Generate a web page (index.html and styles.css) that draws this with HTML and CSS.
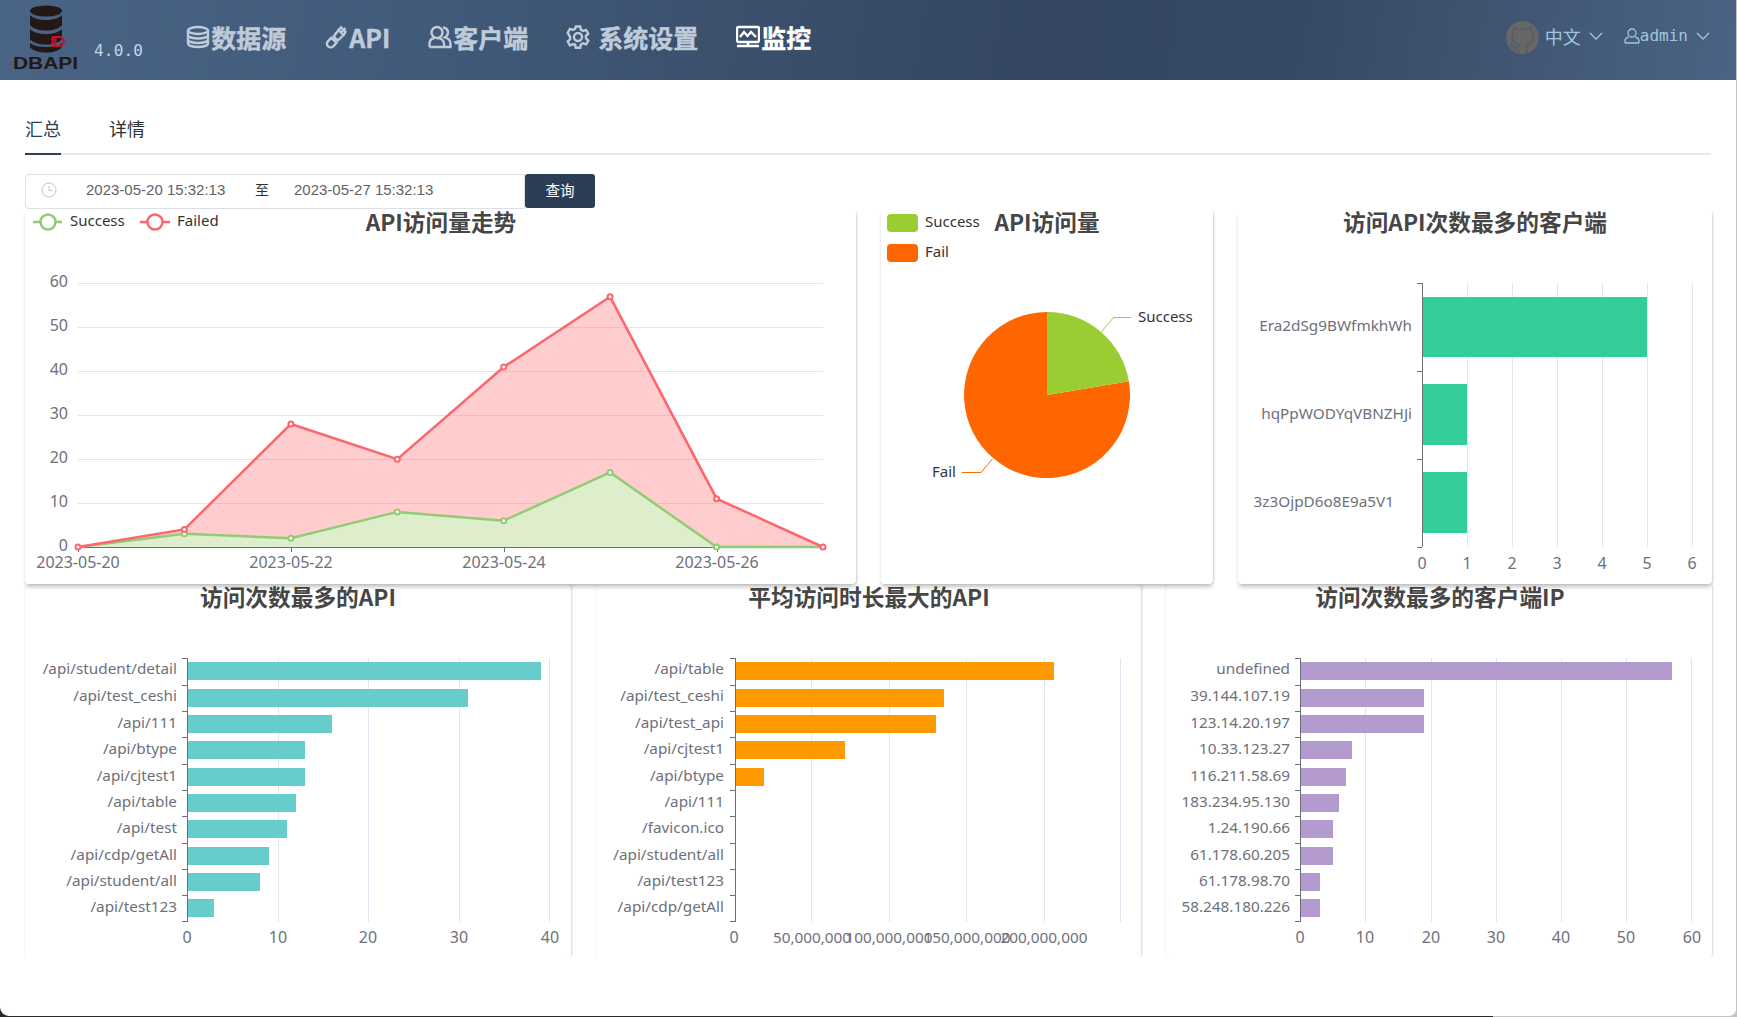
FILE: index.html
```html
<!DOCTYPE html>
<html lang="zh-CN">
<head>
<meta charset="utf-8">
<title>DBAPI</title>
<link rel="stylesheet" href="styles.css">
</head>
<body>
<header class="topbar">
  <div class="brand">
    <svg class="logo" width="65" height="66" viewBox="13 5 65 66">
      <ellipse class="logo-db" cx="46" cy="11" rx="16" ry="5.500"/>
      <path class="logo-db" d="M30 15c3 3.500 9 5 16 5s13-1.500 16-5v10c-2 3.500-9 5.500-16 5.500S32 28.500 30 25z"/>
      <path class="logo-db" d="M30 29c3 3.500 9 5 16 5s13-1.500 16-5v10c-2 3.500-9 5.500-16 5.500S32 42.500 30 39z"/>
      <path class="logo-db" d="M30 43c4 3 9 4 16 4s12-1 16-4v4c-2 3.500-9 5.500-16 5.500S32 50.500 30 47z"/>
      <path class="logo-gate" d="M53 37h6c3 0 4.500 2 4.500 4.500S62 46 59 46h-6zM55.500 37v9M51 39.500h2M51 43.500h2M63.500 41.500h2.500"/>
      <text class="logo-text" x="13" y="69" textLength="65" lengthAdjust="spacingAndGlyphs">DBAPI</text>
    </svg>
    <span class="version">4.0.0</span>
  </div>
  <nav class="nav">
    <a class="nav-item">
      <svg class="nav-icon" viewBox="0 0 24 24"><ellipse cx="12" cy="5.500" rx="10" ry="3.500"/><path d="M2 5.500v13c0 2 4.500 3.500 10 3.500s10-1.500 10-3.500v-13M2 10c0 2 4.500 3.500 10 3.500S22 12 22 10M2 14.500c0 2 4.500 3.500 10 3.500s10-1.500 10-3.500"/></svg>
      <span>数据源</span>
    </a>
    <a class="nav-item">
      <svg class="nav-icon" viewBox="0 0 24 24"><path d="M14.500 5l5 5-5.500 5.500-1.500-1.200-1.800 1.800 1.800 1.800-3.200 3.400c-1.800 1.500-4.200 1.200-5.400-.1s-1.500-3.500.1-5.100l3.400-3.300 1.800 1.800 1.800-1.800-1.200-1.500zM17 7.500L21.500 3"/><path d="M14.500 5l2.500-2.500 4.500 4.500-2 3"/></svg>
      <span>API</span>
    </a>
    <a class="nav-item">
      <svg class="nav-icon" viewBox="0 0 24 24"><circle cx="9" cy="7.500" r="5.500"/><path d="M1.500 22v-3c0-3 2-5.500 5-6M15 2.500c3 .5 5 2.500 5 5 0 2-1 3.500-3 4.800 3.500 1 5.500 3.500 5.500 6.700v3H1.500M9 13c4 0 7 2.500 7 6v3"/></svg>
      <span>客户端</span>
    </a>
    <a class="nav-item nav-item-wide">
      <svg class="nav-icon" viewBox="0 0 24 24"><circle cx="12" cy="12" r="4"/><path d="M9.800 1.500h4.400l.7 3.200 2.100 1.200 3.100-1 2.200 3.800-2.400 2.200v2.400l2.400 2.200-2.200 3.800-3.100-1-2.100 1.200-.7 3.200H9.800l-.7-3.200L7 19.300l-3.100 1-2.200-3.800 2.400-2.200v-2.400L1.700 7.700l2.200-3.800 3.100 1 2.100-1.200z"/></svg>
      <span>系统设置</span>
    </a>
    <a class="nav-item nav-item-active">
      <svg class="nav-icon" viewBox="0 0 24 24"><rect x="1" y="2" width="22" height="15" rx="1.500"/><path d="M4 12l4-5 3.500 4 3.500-4 5 5M1 21h22M12 17v4"/></svg>
      <span>监控</span>
    </a>
  </nav>
  <div class="userbar">
    <svg class="github" viewBox="0 0 16 16"><circle cx="8" cy="8" r="8"/><path class="github-cut" d="M5.470 15.590c.4.07.55-.17.55-.38 0-.19-.01-.82-.01-1.490-2.010.37-2.530-.49-2.690-.94-.09-.23-.48-.94-.82-1.130-.28-.15-.68-.52-.01-.53.63-.01 1.080.58 1.230.82.72 1.210 1.870.87 2.330.66.07-.52.28-.87.51-1.070-1.780-.2-3.640-.89-3.640-3.950 0-.87.31-1.590.82-2.150-.08-.2-.36-1.020.08-2.120 0 0 .67-.21 2.200.82.64-.18 1.320-.27 2-.27s1.360.09 2 .27c1.530-1.040 2.200-.82 2.200-.82.44 1.100.16 1.920.08 2.120.51.56.82 1.270.82 2.150 0 3.070-1.870 3.750-3.650 3.950.29.25.54.730.54 1.480 0 1.070-.01 1.930-.01 2.200 0 .21.15.46.55.38"/></svg>
    <span class="lang">中文</span>
    <svg class="chevron" viewBox="0 0 14 8"><path d="M1 1l6 6 6-6"/></svg>
    <svg class="user-icon" viewBox="0 0 16 16"><circle cx="8" cy="5" r="4"/><path d="M1 15v-1.500C1 11 3 9.500 5 9.200M15 15v-1.500c0-2.500-2-4-4-4.300M1 15h14"/></svg>
    <span class="username">admin</span>
    <svg class="chevron chevron-last" viewBox="0 0 14 8"><path d="M1 1l6 6 6-6"/></svg>
  </div>
</header>

<main class="content">
  <div class="tabs">
    <div class="tab tab-active">汇总</div>
    <div class="tab">详情</div>
  </div>

  <div class="toolbar">
    <div class="daterange">
      <svg class="clock" viewBox="0 0 16 16"><circle cx="8" cy="8" r="7"/><path d="M8 4v4.500h3.500"/></svg>
      <span class="date date-start">2023-05-20 15:32:13</span>
      <span class="date-sep">至</span>
      <span class="date">2023-05-27 15:32:13</span>
    </div>
    <button class="query" type="button">查询</button>
  </div>

  <section class="row row-top">
    <article class="card">
      <svg class="chart" width="831" height="375" viewBox="25 209 831 375">
        <text class="title" x="441" y="221">API访问量走势</text>
        <path class="legend-line ok-line" d="M33 222h29"/><circle class="legend-dot ok-line" cx="48" cy="222" r="7.500"/>
        <text class="legend" x="70" y="220">Success</text>
        <path class="legend-line bad-line" d="M140 222h30"/><circle class="legend-dot bad-line" cx="155" cy="222" r="7.500"/>
        <text class="legend" x="177" y="220">Failed</text>

        <path class="grid" d="M78 283.500h745M78 327.500h745M78 371.500h745M78 415.500h745M78 459.500h745M78 503.500h745"/>
        <text class="tick end" x="68" y="281">60</text>
        <text class="tick end" x="68" y="325">50</text>
        <text class="tick end" x="68" y="369">40</text>
        <text class="tick end" x="68" y="413">30</text>
        <text class="tick end" x="68" y="457">20</text>
        <text class="tick end" x="68" y="501">10</text>
        <text class="tick end" x="68" y="545">0</text>

        <path class="bad-area" d="M78 547L184.400 529.400 290.900 424 397.300 459.200 503.700 367 610.100 296.800 716.600 498.700 823 547z"/>
        <path class="ok-area" d="M78 547L184.400 533.800 290.900 538.200 397.300 511.900 503.700 520.700 610.100 472.400 716.600 547 823 547z"/>
        <path class="axis" d="M78 547.500h745M78.500 547v5M291.500 547v5M504.500 547v5M717.500 547v5"/>
        <path class="series ok-line" d="M78 547L184.400 533.800 290.900 538.200 397.300 511.900 503.700 520.700 610.100 472.400 716.600 547 823 547"/>
        <path class="series bad-line" d="M78 547L184.400 529.400 290.900 424 397.300 459.200 503.700 367 610.100 296.800 716.600 498.700 823 547"/>
        <g class="ok-line dots">
          <circle cx="184.400" cy="533.800" r="2.500"/><circle cx="290.900" cy="538.200" r="2.500"/><circle cx="397.300" cy="511.900" r="2.500"/><circle cx="503.700" cy="520.700" r="2.500"/><circle cx="610.100" cy="472.400" r="2.500"/><circle cx="716.600" cy="547" r="2.500"/>
        </g>
        <g class="bad-line dots">
          <circle cx="78" cy="547" r="2.500"/><circle cx="184.400" cy="529.400" r="2.500"/><circle cx="290.900" cy="424" r="2.500"/><circle cx="397.300" cy="459.200" r="2.500"/><circle cx="503.700" cy="367" r="2.500"/><circle cx="610.100" cy="296.800" r="2.500"/><circle cx="716.600" cy="498.700" r="2.500"/><circle cx="823" cy="547" r="2.500"/>
        </g>
        <text class="tick mid" x="78" y="562">2023-05-20</text>
        <text class="tick mid" x="291" y="562">2023-05-22</text>
        <text class="tick mid" x="504" y="562">2023-05-24</text>
        <text class="tick mid" x="717" y="562">2023-05-26</text>
      </svg>
    </article>

    <article class="card">
      <svg class="chart" width="332" height="375" viewBox="881 209 332 375">
        <text class="title" x="1047" y="221">API访问量</text>
        <rect class="pie-ok" x="887" y="214" width="31" height="18" rx="4"/>
        <text class="legend" x="925" y="221">Success</text>
        <rect class="pie-bad" x="887" y="244" width="31" height="18" rx="4"/>
        <text class="legend" x="925" y="251">Fail</text>
        <path class="pie-bad" d="M1047 395L1128.900 381.300A83 83 0 1 1 1047 312z"/>
        <path class="pie-ok" d="M1047 395V312A83 83 0 0 1 1128.900 381.300z"/>
        <path class="leader ok-leader" d="M1101 332L1113.500 317.500H1131"/>
        <path class="leader bad-leader" d="M992.500 459L981 472.500H962"/>
        <text class="legend" x="1138" y="316">Success</text>
        <text class="legend" x="932" y="471">Fail</text>
      </svg>
    </article>

    <article class="card">
      <svg class="chart" width="474" height="375" viewBox="1238 209 474 375">
        <text class="title" x="1475" y="221">访问API次数最多的客户端</text>
        <path class="grid" d="M1467.500 283v264M1512.500 283v264M1557.500 283v264M1602.500 283v264M1647.500 283v264M1692.500 283v264"/>
        <rect class="bar-green" x="1422" y="297" width="225" height="60"/>
        <rect class="bar-green" x="1422" y="384" width="45" height="61"/>
        <rect class="bar-green" x="1422" y="472" width="45" height="61"/>
        <path class="axis" d="M1422.500 283v264M1417 283.500h5M1417 371.500h5M1417 459.500h5M1417 547.500h5"/>
        <text class="tick label end" x="1412" y="325">Era2dSg9BWfmkhWh</text>
        <text class="tick label end" x="1412" y="413">hqPpWODYqVBNZHJi</text>
        <text class="tick label end" x="1394" y="501">3z3OjpD6o8E9a5V1</text>
        <text class="tick mid" x="1422" y="563">0</text>
        <text class="tick mid" x="1467" y="563">1</text>
        <text class="tick mid" x="1512" y="563">2</text>
        <text class="tick mid" x="1557" y="563">3</text>
        <text class="tick mid" x="1602" y="563">4</text>
        <text class="tick mid" x="1647" y="563">5</text>
        <text class="tick mid" x="1692" y="563">6</text>
      </svg>
    </article>
  </section>

  <section class="row row-bottom">
    <article class="card card-flat">
      <svg class="chart" width="546" height="373" viewBox="25 584 546 373">
        <text class="title" x="298" y="596">访问次数最多的API</text>
        <path class="grid" d="M278.500 658v264M368.500 658v264M459.500 658v264M549.500 658v264"/>
        <g class="bar-teal">
          <rect x="187" y="662" width="354" height="18"/><rect x="187" y="689" width="281" height="18"/><rect x="187" y="715" width="145" height="18"/><rect x="187" y="741" width="118" height="18"/><rect x="187" y="768" width="118" height="18"/><rect x="187" y="794" width="109" height="18"/><rect x="187" y="820" width="100" height="18"/><rect x="187" y="847" width="82" height="18"/><rect x="187" y="873" width="73" height="18"/><rect x="187" y="899" width="27" height="18"/>
        </g>
        <path class="axis" d="M187.500 658v264M182 658.500h5M182 685.500h5M182 711.500h5M182 737.500h5M182 764.500h5M182 790.500h5M182 816.500h5M182 843.500h5M182 869.500h5M182 895.500h5M182 921.500h5"/>
        <text class="tick label end" x="177" y="668">/api/student/detail</text>
        <text class="tick label end" x="177" y="695">/api/test_ceshi</text>
        <text class="tick label end" x="177" y="722">/api/111</text>
        <text class="tick label end" x="177" y="748">/api/btype</text>
        <text class="tick label end" x="177" y="775">/api/cjtest1</text>
        <text class="tick label end" x="177" y="801">/api/table</text>
        <text class="tick label end" x="177" y="827">/api/test</text>
        <text class="tick label end" x="177" y="854">/api/cdp/getAll</text>
        <text class="tick label end" x="177" y="880">/api/student/all</text>
        <text class="tick label end" x="177" y="906">/api/test123</text>
        <text class="tick mid" x="187" y="937">0</text>
        <text class="tick mid" x="278" y="937">10</text>
        <text class="tick mid" x="368" y="937">20</text>
        <text class="tick mid" x="459" y="937">30</text>
        <text class="tick mid" x="550" y="937">40</text>
      </svg>
    </article>

    <article class="card card-flat">
      <svg class="chart" width="545" height="373" viewBox="596 584 545 373">
        <text class="title" x="869" y="596">平均访问时长最大的API</text>
        <path class="grid" d="M811.500 658v264M889.500 658v264M966.500 658v264M1044.500 658v264M1120.500 658v264"/>
        <g class="bar-orange">
          <rect x="735" y="662" width="319" height="18"/><rect x="735" y="689" width="209" height="18"/><rect x="735" y="715" width="201" height="18"/><rect x="735" y="741" width="110" height="18"/><rect x="735" y="768" width="29" height="18"/>
        </g>
        <path class="axis" d="M735.500 658v264M730 658.500h5M730 685.500h5M730 711.500h5M730 737.500h5M730 764.500h5M730 790.500h5M730 816.500h5M730 843.500h5M730 869.500h5M730 895.500h5M730 921.500h5"/>
        <text class="tick label end" x="724" y="668">/api/table</text>
        <text class="tick label end" x="724" y="695">/api/test_ceshi</text>
        <text class="tick label end" x="724" y="722">/api/test_api</text>
        <text class="tick label end" x="724" y="748">/api/cjtest1</text>
        <text class="tick label end" x="724" y="775">/api/btype</text>
        <text class="tick label end" x="724" y="801">/api/111</text>
        <text class="tick label end" x="724" y="827">/favicon.ico</text>
        <text class="tick label end" x="724" y="854">/api/student/all</text>
        <text class="tick label end" x="724" y="880">/api/test123</text>
        <text class="tick label end" x="724" y="906">/api/cdp/getAll</text>
        <text class="tick mid" x="734" y="937">0</text>
        <text class="tick label mid" x="812" y="937">50,000,000</text>
        <text class="tick label mid" x="889" y="937">100,000,000</text>
        <text class="tick label mid" x="967" y="937">150,000,000</text>
        <text class="tick label mid" x="1044" y="937">200,000,000</text>
      </svg>
    </article>

    <article class="card card-flat">
      <svg class="chart" width="546" height="373" viewBox="1166 584 546 373">
        <text class="title" x="1440" y="596">访问次数最多的客户端IP</text>
        <path class="grid" d="M1365.500 658v264M1431.500 658v264M1496.500 658v264M1561.500 658v264M1626.500 658v264M1691.500 658v264"/>
        <g class="bar-purple">
          <rect x="1300" y="662" width="372" height="18"/><rect x="1300" y="689" width="124" height="18"/><rect x="1300" y="715" width="124" height="18"/><rect x="1300" y="741" width="52" height="18"/><rect x="1300" y="768" width="46" height="18"/><rect x="1300" y="794" width="39" height="18"/><rect x="1300" y="820" width="33" height="18"/><rect x="1300" y="847" width="33" height="18"/><rect x="1300" y="873" width="20" height="18"/><rect x="1300" y="899" width="20" height="18"/>
        </g>
        <path class="axis" d="M1300.500 658v264M1295 658.500h5M1295 685.500h5M1295 711.500h5M1295 737.500h5M1295 764.500h5M1295 790.500h5M1295 816.500h5M1295 843.500h5M1295 869.500h5M1295 895.500h5M1295 921.500h5"/>
        <text class="tick label end" x="1290" y="668">undefined</text>
        <text class="tick label end" x="1290" y="695">39.144.107.19</text>
        <text class="tick label end" x="1290" y="722">123.14.20.197</text>
        <text class="tick label end" x="1290" y="748">10.33.123.27</text>
        <text class="tick label end" x="1290" y="775">116.211.58.69</text>
        <text class="tick label end" x="1290" y="801">183.234.95.130</text>
        <text class="tick label end" x="1290" y="827">1.24.190.66</text>
        <text class="tick label end" x="1290" y="854">61.178.60.205</text>
        <text class="tick label end" x="1290" y="880">61.178.98.70</text>
        <text class="tick label end" x="1290" y="906">58.248.180.226</text>
        <text class="tick mid" x="1300" y="937">0</text>
        <text class="tick mid" x="1365" y="937">10</text>
        <text class="tick mid" x="1431" y="937">20</text>
        <text class="tick mid" x="1496" y="937">30</text>
        <text class="tick mid" x="1561" y="937">40</text>
        <text class="tick mid" x="1626" y="937">50</text>
        <text class="tick mid" x="1692" y="937">60</text>
      </svg>
    </article>
  </section>
</main>
</body>
</html>
```
FILE: styles.css
```css
* { box-sizing: border-box; }

html {
  height: 1017px;
  overflow: hidden;
  background: linear-gradient(to right, #2b2b2b 0, #2b2b2b 1493px, #c4c4c4 1493px);
}

body {
  margin: 0;
  width: 1736px;
  height: 1016px;
  overflow: hidden;
  background: #fff;
  border-radius: 0 0 7px 9px;
  font-family: "Noto Sans", "Noto Sans CJK SC", sans-serif;
  color: #303133;
}

/* top bar */
.topbar {
  height: 80px;
  display: flex;
  align-items: center;
  padding-left: 13px;
  background: linear-gradient(100deg, #4a6485 0%, #415a7a 25%, #34465f 60%, #364a64 75%, #4b6384 100%);
}

.brand {
  display: flex;
  align-items: flex-start;
  height: 80px;
  padding-top: 5px;
  margin-right: 43px;
}

.logo { display: block; overflow: visible; }
.logo-db { fill: #231815; }
.logo-gate { fill: none; stroke: #c8102e; stroke-width: 2; }
.logo-text {
  font-family: "Liberation Sans", sans-serif;
  font-weight: 700;
  font-size: 17px;
  fill: #231815;
}

.version {
  margin: 36px 0 0 16px;
  font-family: "DejaVu Sans Mono", monospace;
  font-size: 16px;
  line-height: 20px;
  letter-spacing: .2px;
  color: #c0d6e8;
}

.nav {
  display: flex;
  align-items: center;
  gap: 38px;
  margin-top: -6px;
}

.nav-item {
  display: flex;
  align-items: center;
  gap: 1px;
  font-family: "Noto Sans CJK SC", sans-serif;
  font-size: 25px;
  line-height: 34px;
  font-weight: 700;
  color: #bfcbd9;
  -webkit-text-stroke: .4px currentColor;
}

.nav-item-wide { gap: 8px; }
.nav-item-active { color: #fff; }

.nav-icon {
  width: 24px;
  height: 24px;
  fill: none;
  stroke: currentColor;
  stroke-width: 2.400;
}

.userbar {
  margin-left: auto;
  padding-right: 26px;
  margin-top: -8px;
  display: flex;
  align-items: center;
  color: #a3c5dc;
}

.github { width: 33px; height: 33px; margin-right: 6px; margin-top: 2px; }
.github circle { fill: #666; }
.github-cut { fill: #666; stroke: #46566a; stroke-width: .45; }

.lang {
  font-family: "Noto Sans CJK SC", sans-serif;
  font-size: 18px;
  line-height: 24px;
}

.chevron {
  width: 14px;
  height: 8px;
  margin-left: 8px;
  margin-right: 21px;
  fill: none;
  stroke: currentColor;
  stroke-width: 1.300;
}

.chevron-last { margin-right: 0; }

.user-icon {
  width: 16px;
  height: 16px;
  fill: none;
  stroke: currentColor;
  stroke-width: 1.300;
}

.username {
  font-family: "DejaVu Sans Mono", monospace;
  font-size: 16px;
  line-height: 24px;
}

/* tabs */
.content { padding: 0 25px; }

.tabs {
  display: flex;
  gap: 48px;
  height: 75px;
  padding-top: 29px;
  border-bottom: 2px solid #e4e7ed;
}

.tab {
  height: 46px;
  font-family: "Noto Sans CJK SC", sans-serif;
  font-size: 18px;
  line-height: 38px;
  color: #303133;
  border-bottom: 2px solid transparent;
}

.tab-active { border-bottom-color: #304156; color: #2c3e55; }

/* date filter */
.toolbar {
  display: flex;
  align-items: center;
  margin-top: 18px;
  height: 36px;
}

.daterange {
  width: 500px;
  height: 35px;
  display: flex;
  align-items: center;
  border: 1px solid #dcdfe6;
  border-radius: 4px 0 0 4px;
  font-family: "Liberation Sans", sans-serif;
  font-size: 15px;
  line-height: 30px;
  padding: 0 0 2px 15px;
  color: #606266;
}

.clock {
  width: 16px;
  height: 16px;
  fill: none;
  stroke: #c0c4cc;
  stroke-width: 1;
}

.date { width: 139px; white-space: nowrap; }
.date-start { margin-left: 29px; }

.date-sep {
  width: 69px;
  padding-left: 30px;
  margin-top: -3px;
  font-family: "Noto Sans CJK SC", sans-serif;
  font-size: 14px;
  color: #303133;
}

.query {
  width: 70px;
  height: 34px;
  margin: 0;
  padding: 0 0 3px;
  border: 0;
  border-radius: 3px;
  background: #2c3e55;
  color: #fff;
  font-family: "Noto Sans CJK SC", sans-serif;
  font-size: 14.500px;
}

/* chart grid */
.row {
  display: grid;
  column-gap: 25px;
}

.row-top {
  grid-template-columns: 831px 332px 474px;
  height: 375px;
  position: relative;
  z-index: 1;
}

.row-bottom {
  grid-template-columns: 546px 545px 546px;
  height: 373px;
}

.card {
  background: #fff;
  border-radius: 4px;
  box-shadow: 0 4px 4px -1px rgba(0, 0, 0, .24), 2px 1px 2px -1px rgba(0, 0, 0, .12);
}

.card-flat {
  background: transparent;
  box-shadow: 2px 0 0 -0.500px #e3e3e3, -1px 0 0 #f5f5f5;
}

.chart { display: block; overflow: visible; }

.title {
  font-family: "Noto Sans CJK SC", sans-serif;
  font-size: 22.700px;
  font-weight: 700;
  fill: #464646;
  text-anchor: middle;
  dominant-baseline: central;
}

.legend {
  font-size: 15px;
  fill: #333;
  dominant-baseline: central;
}

.tick {
  font-size: 16px;
  fill: #6e7079;
  dominant-baseline: central;
}

.label { font-size: 15.300px; }

.end { text-anchor: end; }
.mid { text-anchor: middle; }

.grid { fill: none; stroke: #e0e6f1; stroke-width: 1; }
.axis { fill: none; stroke: #6e7079; stroke-width: 1; }

.series { fill: none; stroke-width: 2.500; }
.ok-line { stroke: #91cc75; }
.bad-line { stroke: #fd666d; }
.ok-area { fill: #deeecd; }
.bad-area { fill: #ff6b6b; fill-opacity: .34; }
.dots circle { fill: #fff; stroke-width: 2; }
.legend-line { fill: none; stroke-width: 2.500; }
.legend-dot { fill: #fff; stroke-width: 2.500; }

.pie-ok { fill: #9acd32; }
.pie-bad { fill: #ff6600; }
.leader { fill: none; stroke-width: 1; }
.ok-leader { stroke: #9acd32; }
.bad-leader { stroke: #ff6600; }

.bar-green { fill: #32cd99; }
.bar-teal { fill: #67cdcc; }
.bar-orange { fill: #ff9900; }
.bar-purple { fill: #b39bd0; }
```
